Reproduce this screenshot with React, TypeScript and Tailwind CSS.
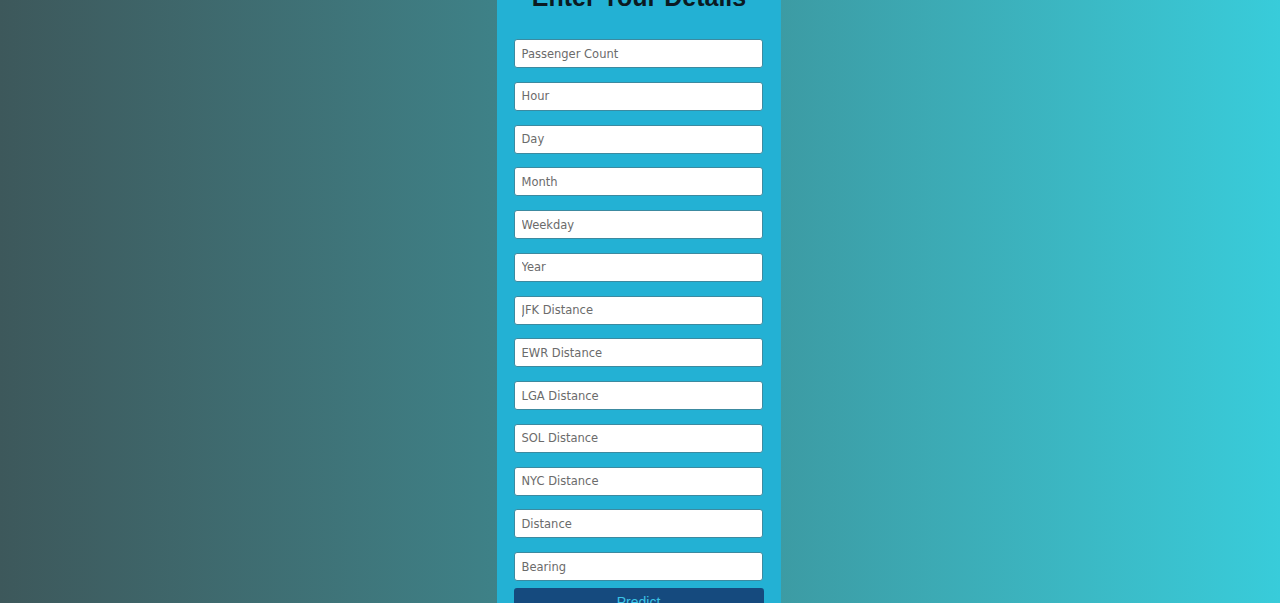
import React from "react";

const fields = [
  "Passenger Count",
  "Hour",
  "Day",
  "Month",
  "Weekday",
  "Year",
  "JFK Distance",
  "EWR Distance",
  "LGA Distance",
  "SOL Distance",
  "NYC Distance",
  "Distance",
  "Bearing",
];

export default function App() {
  return (
    <div className="h-[603px] w-full overflow-hidden bg-gradient-to-r from-[#3d585b] via-[#3c8e95] to-[#38ccda] flex justify-center">
      <div className="w-[284px] h-full bg-[#23b1d4] ml-[-3px] flex flex-col items-center">
        <h1
          className="mt-[-18px] text-[25px] font-bold text-[#0b1a22] leading-[30px] ml-[1px]"
          style={{ fontFamily: '"Liberation Sans", Arial, sans-serif' }}
        >
          Enter Your Details
        </h1>
        <form className="mt-[27px] flex flex-col gap-[13.75px] w-[249px] ml-[-1px]">
          {fields.map((f) => (
            <input
              key={f}
              placeholder={f}
              className="h-[29px] w-full bg-white rounded-[3px] border border-[#3c8aa0] px-[7px] text-[#333] placeholder:text-[#6b6b6b] outline-none"
              style={{ fontFamily: '"DejaVu Sans", Verdana, sans-serif', fontSize: "11.5px" }}
            />
          ))}
        </form>
        <button
          className="mt-[7px] w-[250px] h-[36px] bg-[#154a7e] rounded-[3px] text-[#3cc3e6] text-[14px] pt-[2px] leading-[24px] self-center"
          style={{ fontFamily: '"Liberation Sans", Arial, sans-serif' }}
        >
          Predict
        </button>
      </div>
    </div>
  );
}
